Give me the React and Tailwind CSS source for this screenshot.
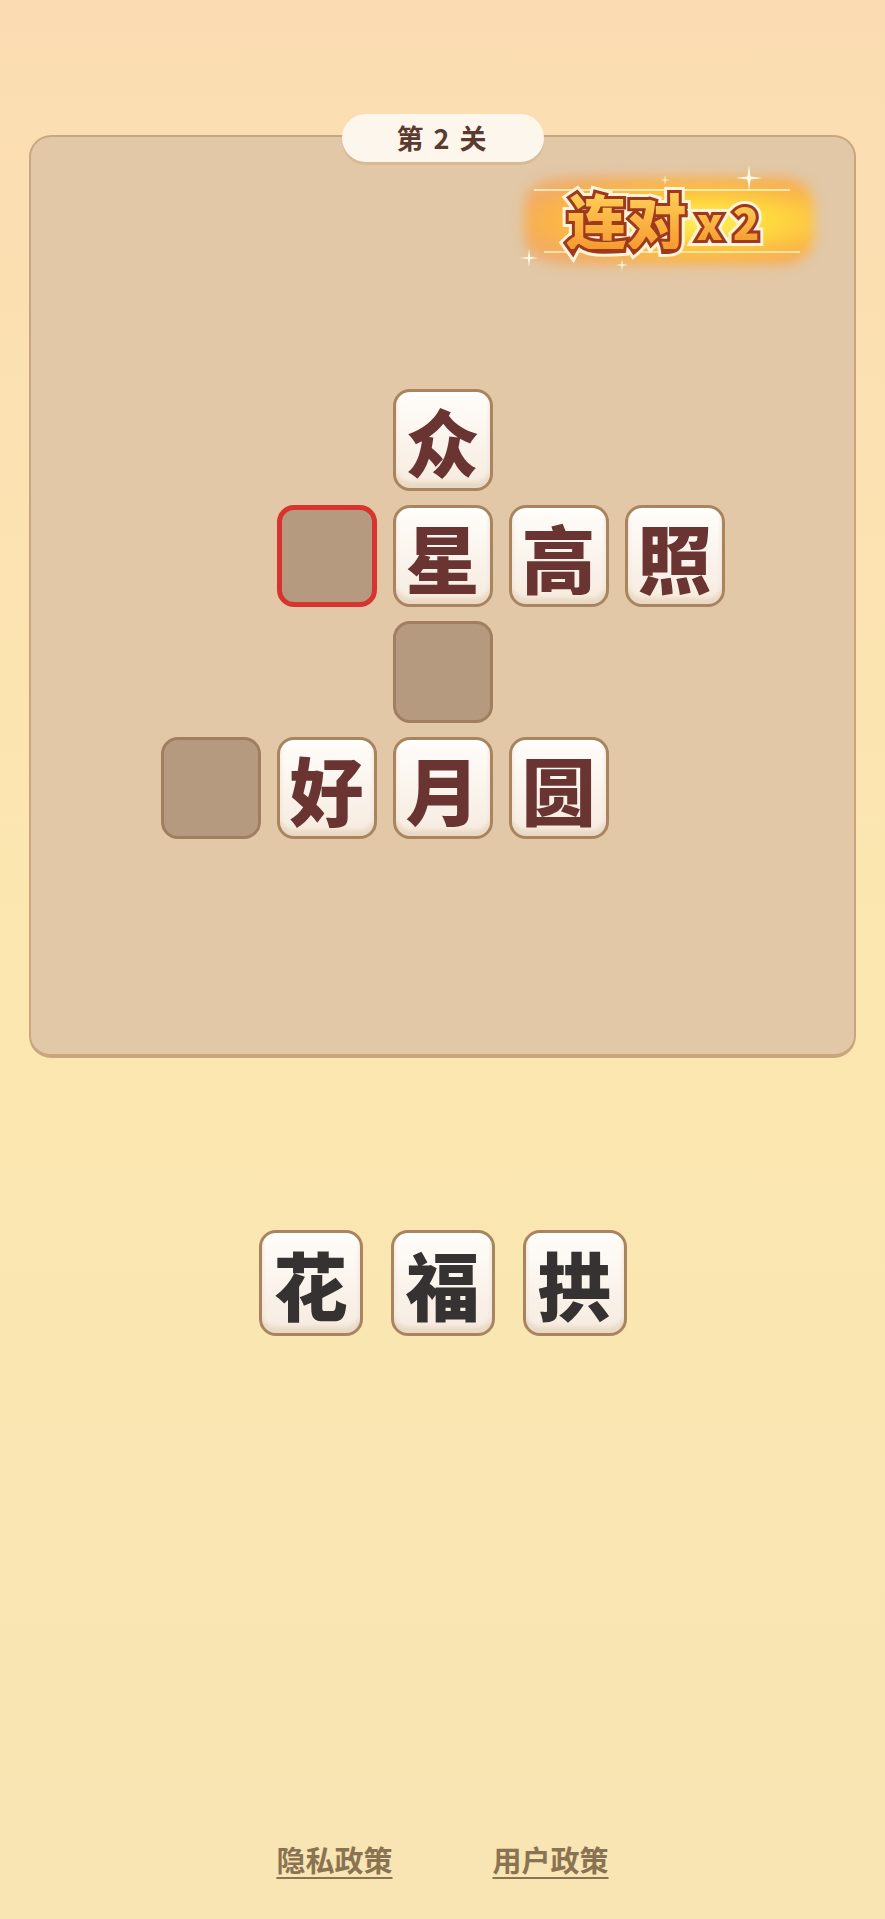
import React from 'react'

const CJK = "font-['Noto_Sans_CJK_SC','Noto_Sans',sans-serif]"

// grid cells: null = nothing, '' = empty slot, 'red' = selected empty slot
const board = [
  [null, null, '众', null, null],
  [null, 'red', '星', '高', '照'],
  [null, null, '', null, null],
  ['', '好', '月', '圆', null],
]

const options = ['花', '福', '拱']

const Tile = ({ ch, dark }) => (
  <div
    className={`w-full h-full rounded-[17px] border-[3px] border-[#a8855f] bg-gradient-to-b from-[#fffdfa] to-[#f6ebdf] shadow-[inset_0_-6px_4px_#ead8c4,inset_0_3px_3px_#ffffff] flex items-center justify-center ${CJK}`}
  >
    <span className={`font-black leading-none text-[74px] ${dark ? 'text-[#363232]' : 'text-[#6a3432]'}`}>{ch}</span>
  </div>
)

const Slot = ({ selected }) => (
  <div
    className={`w-full h-full rounded-[17px] bg-[#b69a80] ${
      selected ? 'border-[5px] border-[#d8342f]' : 'border-[3px] border-[#9f7f60]'
    }`}
  />
)

const Sparkle = ({ className }) => (
  <svg viewBox="0 0 20 20" className={className}>
    <path d="M10 0 L11.2 8.8 L20 10 L11.2 11.2 L10 20 L8.8 11.2 L0 10 L8.8 8.8 Z" fill="#fffbe6" />
  </svg>
)

// three stacked copies: white halo, dark red outline, yellow-orange fill
const ComboText = ({ children, size }) => (
  <span className={`relative inline-block leading-none font-black ${size}`}>
    <span className="text-[#fff3da] [-webkit-text-stroke:12px_#fff3da]">{children}</span>
    <span className="absolute inset-0 text-[#9e3a1b] [-webkit-text-stroke:6px_#9e3a1b]">{children}</span>
    <span className="absolute inset-0 bg-gradient-to-b from-[#ffd25a] to-[#f59a30] bg-clip-text text-transparent">{children}</span>
  </span>
)

const ComboBadge = () => (
  <div className="absolute right-[40px] top-[28px] w-[294px] h-[108px] flex items-center justify-center">
    <div className="absolute left-[4px] right-[0px] top-[12px] bottom-[8px] rounded-[30px] blur-[6px] bg-[radial-gradient(ellipse_at_62%_50%,#fff35c_0%,#ffd93e_28%,#fbb545_58%,rgba(246,160,80,0.75)_80%,rgba(240,190,140,0)_100%)]" />
    <div className="absolute left-[14px] right-[24px] top-[24px] h-[2px] bg-[#fff3c4]/80" />
    <div className="absolute left-[24px] right-[14px] bottom-[20px] h-[2px] bg-[#fff3c4]/70" />
    <Sparkle className="absolute right-[52px] top-[0px] w-[26px] h-[26px]" />
    <Sparkle className="absolute left-[0px] bottom-[6px] w-[18px] h-[18px]" />
    <Sparkle className="absolute left-[96px] bottom-[2px] w-[12px] h-[12px]" />
    <Sparkle className="absolute left-[140px] top-[10px] w-[10px] h-[10px]" />
    <div className={`relative flex items-end gap-[10px] pr-[8px] ${CJK}`}>
      <ComboText size="text-[60px]">连对</ComboText>
      <ComboText size="text-[44px] mb-[6px]">x 2</ComboText>
    </div>
  </div>
)

export default function App() {
  return (
    <div className={`min-h-[1919px] w-full flex flex-col bg-gradient-to-b from-[#fbdcb2] via-[#fce7b0] to-[#f8e5b3] ${CJK}`}>
      {/* board panel */}
      <div className="pt-[135px] px-[29px]">
        <div className="relative h-[923px] rounded-[22px] bg-[#e2c8a7] border-t-[2px] border-x-[2px] border-b-[4px] border-[#c8a67f]">
          <div className="absolute left-1/2 -translate-x-1/2 -top-[23px] w-[202px] h-[48px] rounded-full bg-[#fdf6ec] shadow-[0_3px_0_#d8b896] flex items-center justify-center">
            <span className="text-[27px] font-bold text-[#5b3a30] tracking-[2px]">第 2 关</span>
          </div>

          <ComboBadge />

          <div className="pt-[252px] flex justify-center">
            <div className="grid grid-cols-[repeat(5,100px)] grid-rows-[repeat(4,102px)] gap-x-[16px] gap-y-[14px]">
              {board.flatMap((row, r) =>
                row.map((cell, c) => (
                  <div key={`${r}-${c}`}>
                    {cell === null ? null : cell === '' ? (
                      <Slot />
                    ) : cell === 'red' ? (
                      <Slot selected />
                    ) : (
                      <Tile ch={cell} />
                    )}
                  </div>
                ))
              )}
            </div>
          </div>
        </div>
      </div>

      {/* answer options */}
      <div className="mt-[172px] flex justify-center gap-[28px]">
        {options.map((o) => (
          <div key={o} className="w-[104px] h-[106px]">
            <Tile ch={o} dark />
          </div>
        ))}
      </div>

      <div className="flex-1" />

      {/* footer */}
      <div className="pb-[38px] flex justify-center gap-[100px]">
        <span className="text-[29px] font-bold text-[#8a7352] underline decoration-[2px] underline-offset-[5px]">隐私政策</span>
        <span className="text-[29px] font-bold text-[#8a7352] underline decoration-[2px] underline-offset-[5px]">用户政策</span>
      </div>
    </div>
  )
}
